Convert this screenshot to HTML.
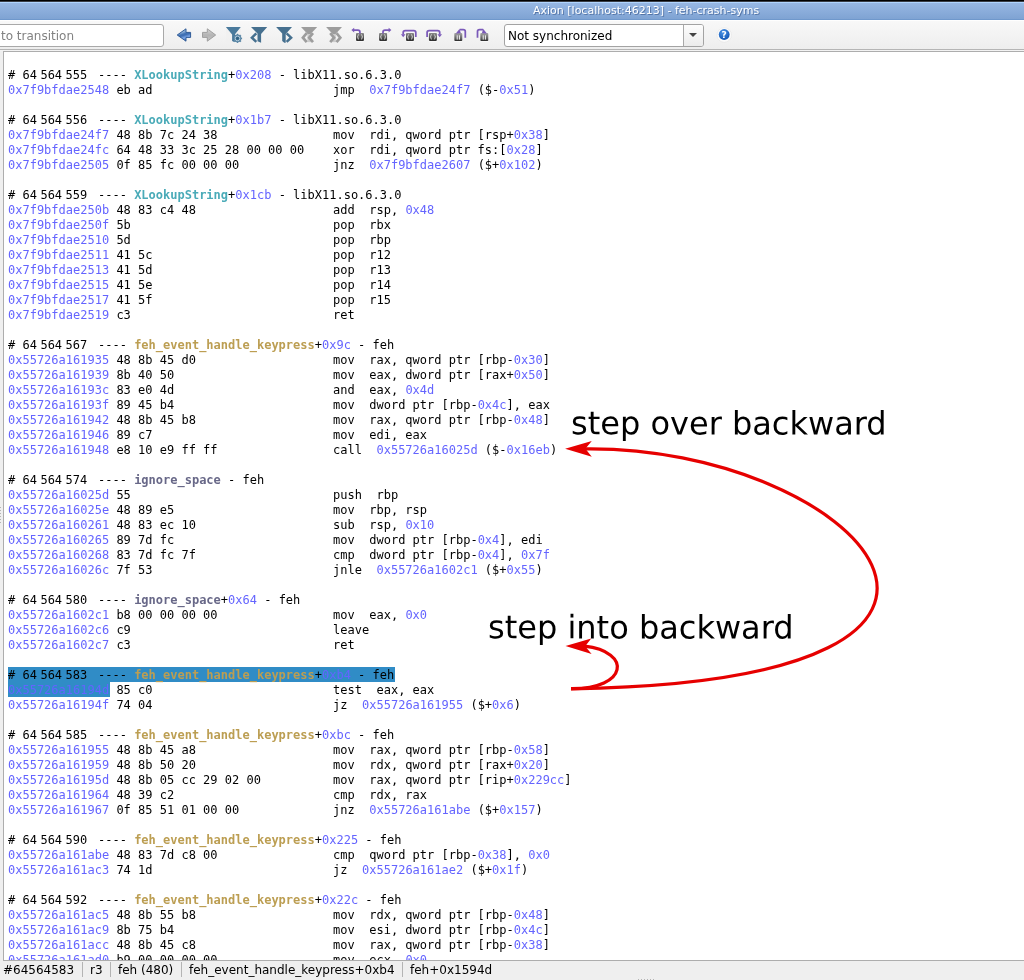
<!DOCTYPE html>
<html lang="en">
<head>
<meta charset="utf-8">
<title>Axion [localhost:46213] - feh-crash-syms</title>
<style>
html,body{margin:0;padding:0;}
body{width:1024px;height:980px;overflow:hidden;position:relative;background:#efefef;font-family:"DejaVu Sans","Liberation Sans",sans-serif;font-size:12px;color:#000;}
#top{position:absolute;left:0;top:0;width:1024px;height:2px;background:linear-gradient(#000 0,#000 1px,#3a3e46 1px,#3a3e46 2px);}
#title{position:absolute;left:0;top:2px;width:1024px;height:18px;background:linear-gradient(#b0d5ff 0,#b0d5ff 1px,#97b7e3 1px,#7fa3d3 17px,#6f98cc 17px,#6f98cc 18px);}
#title span{will-change:transform;text-shadow:1px 1px 0 rgba(45,75,125,.55);position:absolute;left:533px;top:2px;font-size:11px;line-height:13px;color:#fff;white-space:nowrap;}
#tb{position:absolute;left:0;top:20px;width:1024px;height:29px;background:linear-gradient(#fefefe 0,#fefefe 1px,#f8f8f8 1px,#eeeeee 100%);}
#tbl{position:absolute;left:0;top:49px;width:1024px;height:1px;background:#b5b5b5;}
#tbl2{position:absolute;left:0;top:50px;width:1024px;height:1px;background:#f3f3f3;}
#inp{position:absolute;left:-20px;top:24px;width:182px;height:21px;border:1px solid #a9a9a9;border-radius:3px;background:#fff;}
#inp span{will-change:transform;position:absolute;left:20px;top:4px;line-height:15px;color:#828282;white-space:nowrap;}
#cb{position:absolute;left:504px;top:24px;width:198px;height:21px;border:1px solid #a3a3a3;border-radius:3px;background:#fff;overflow:hidden;}
#cb span{will-change:transform;position:absolute;left:3px;top:4px;line-height:15px;white-space:nowrap;}
#cb i{position:absolute;left:178px;top:0;width:20px;height:21px;border-left:1px solid #a9a9a9;background:linear-gradient(#fdfdfd,#ececec);}
#cb u{position:absolute;left:184px;top:8px;width:0;height:0;border-left:4px solid transparent;border-right:4px solid transparent;border-top:4px solid #444;}
#pane{position:absolute;left:3px;top:51px;width:1030px;height:908px;border:1px solid #adadad;background:#fff;overflow:hidden;}
pre{position:absolute;left:4px;top:16px;will-change:transform;margin:0;font-family:"DejaVu Sans Mono","Liberation Mono",monospace;font-size:12px;line-height:15px;white-space:pre;color:#000;}
pre b{font-weight:normal;}
pre b.a{color:#6464ff;}
pre b.t{font-weight:bold;color:#4aabb8;}
pre b.f{font-weight:bold;color:#bc9e52;}
pre b.i{font-weight:bold;color:#686888;}
pre .n{word-spacing:-3.72px;}

#pane .hl{position:absolute;height:15px;background:#308cc6;}
#sb{position:absolute;left:0;top:961px;width:1024px;height:19px;background:#efefef;}
#sb span{will-change:transform;position:absolute;top:2px;line-height:15px;white-space:nowrap;}
#sb i{position:absolute;top:1px;width:1px;height:15px;background:#b4b4b4;}
.d{position:absolute;width:1px;height:1px;background:#b4b4b4;}
#ann{position:absolute;left:0;top:0;width:1024px;height:980px;pointer-events:none;}
.ic{position:absolute;top:27px;width:16px;height:16px;overflow:visible;}
</style>
</head>
<body>
<div id="top"></div>
<div id="title"><span>Axion [localhost:46213] - feh-crash-syms</span></div>
<div id="tb"></div>
<div id="tbl"></div><div id="tbl2"></div>
<div id="inp"><span>to transition</span></div>
<div id="cb"><span>Not synchronized</span><i></i><u></u></div>
<svg id="icons" width="340" height="30" viewBox="170 20 340 30" style="position:absolute;left:170px;top:20px">
<defs>
<linearGradient id="gba" x1="0" y1="0" x2=".35" y2="1"><stop offset="0" stop-color="#b4d2ea"/><stop offset=".38" stop-color="#86abd6"/><stop offset=".52" stop-color="#4273b6"/><stop offset=".62" stop-color="#3e6eb2"/><stop offset=".82" stop-color="#7ea9ea"/><stop offset="1" stop-color="#4a79be"/></linearGradient>
<linearGradient id="gfa" x1="0" y1="0" x2="0" y2="1"><stop offset="0" stop-color="#d8d8d8"/><stop offset=".5" stop-color="#b4b4b4"/><stop offset="1" stop-color="#c4c4c4"/></linearGradient>
<linearGradient id="gsq" x1="0" y1="0" x2="0" y2="1"><stop offset="0" stop-color="#8c8c8c"/><stop offset="1" stop-color="#2c2c2c"/></linearGradient>
<linearGradient id="gsq2" x1="0" y1="0" x2="0" y2="1"><stop offset="0" stop-color="#a8a8a8"/><stop offset=".8" stop-color="#555"/><stop offset="1" stop-color="#262626"/></linearGradient>
<radialGradient id="ghl" cx=".4" cy=".3" r=".8"><stop offset="0" stop-color="#4f97e8"/><stop offset="1" stop-color="#0b4fae"/></radialGradient>
</defs>
<path d="M177.2,35 L186,28.8 V32.4 H190.6 V37.4 H186 V41.2 Z" fill="url(#gba)" stroke="#23508f" stroke-width=".9" stroke-linejoin="round"/>
<path d="M215.7,35 L207.3,28.8 V32.4 H202.5 V37.4 H207.3 V41.2 Z" fill="url(#gfa)" stroke="#999" stroke-width=".9" stroke-linejoin="round"/>
<rect x="226" y="27" width="15" height="15.5" fill="#f0f0f0" opacity=".8"/>
<path d="M225.9,27 H240.8 L235,34.2 V36 H234.2 V42 L232.1,41 V34.4 Z" fill="#4a7a9c"/>
<polygon points="237.50,33.80 238.76,35.35 240.75,35.15 240.55,37.14 242.10,38.40 240.55,39.66 240.75,41.65 238.76,41.45 237.50,43.00 236.24,41.45 234.25,41.65 234.45,39.66 232.90,38.40 234.45,37.14 234.25,35.15 236.24,35.35" fill="#4a7a9c" stroke="#4a7a9c" stroke-width=".6" stroke-linejoin="round"/>
<circle cx="237.5" cy="38.4" r="2.35" fill="none" stroke="#b9d0df" stroke-width=".95"/>
<circle cx="237.5" cy="38.4" r="1.3" fill="#2e6080"/>
<path d="M251,27 H267.2 L261.1,33.9 V42.75 L257.5,41.3 V33.4 Z" fill="#46708f"/>
<path d="M256.3,33.4 L251.9,37.65 L256.3,41.9" fill="none" stroke="#46708f" stroke-width="2.5"/>
<path d="M276.1,27 H292 L285.7,33.9 V42.75 H284.3 L282.2,41.1 V33.4 Z" fill="#46708f"/>
<path d="M286.6,33.4 L291.1,37.65 L286.6,41.9" fill="none" stroke="#46708f" stroke-width="2.5"/>
<path d="M301,27 H317.2 L310.6,34 H307.6 Z" fill="#9d9d9d"/><rect x="307.4" y="33.5" width="3.6" height="8.6" fill="#9d9d9d" opacity=".45"/>
<path d="M306.7,33.2 L302.9,37.65 L306.7,42.1 M313,33.2 L309.2,37.65 L313,42.1" fill="none" stroke="#9d9d9d" stroke-width="2.7"/>
<path d="M326.1,27 H342 L335.6,34 H332.6 Z" fill="#9d9d9d"/><rect x="332.2" y="33.5" width="3.6" height="8.6" fill="#9d9d9d" opacity=".45"/>
<path d="M330.2,33.2 L334,37.65 L330.2,42.1 M336.5,33.2 L340.3,37.65 L336.5,42.1" fill="none" stroke="#9d9d9d" stroke-width="2.7"/>
<rect x="355.7" y="32.6" width="8.6" height="9.2" rx="1" fill="#fff" opacity=".7"/>
<rect x="356.0" y="32.9" width="8" height="8" rx=".8" fill="url(#gsq)"/>
<path d="M359.0,34.6 q-1,0 -1,1 v.6 q0,.7 -.9,.7 q.9,0 .9,.7 v.6 q0,1 1,1 M361.0,34.6 q1,0 1,1 v.6 q0,.7 .9,.7 q-.9,0 -.9,.7 v.6 q0,1 -1,1" fill="none" stroke="#d8d8d8" stroke-width=".9"/>
<path d="M359.9,33.4 V32.1 Q359.9,30.1 357.9,30.1 H353.4" fill="none" stroke="#7b5ab9" stroke-width="1.75"/><path d="M351.4,30.1 L354.2,27.7 V32.5 Z" fill="#7b5ab9"/>
<rect x="378.8" y="32.6" width="8.6" height="9.2" rx="1" fill="#fff" opacity=".7"/>
<rect x="379.1" y="32.9" width="8" height="8" rx=".8" fill="url(#gsq)"/>
<path d="M382.1,34.6 q-1,0 -1,1 v.6 q0,.7 -.9,.7 q.9,0 .9,.7 v.6 q0,1 1,1 M384.1,34.6 q1,0 1,1 v.6 q0,.7 .9,.7 q-.9,0 -.9,.7 v.6 q0,1 -1,1" fill="none" stroke="#d8d8d8" stroke-width=".9"/>
<path d="M383,33.4 V32.1 Q383,30.1 385,30.1 H389.4" fill="none" stroke="#7b5ab9" stroke-width="1.75"/><path d="M391.4,30.1 L388.6,27.7 V32.5 Z" fill="#7b5ab9"/>
<rect x="405.7" y="32.6" width="8.6" height="9.2" rx="1" fill="#fff" opacity=".7"/>
<rect x="406.0" y="32.9" width="8" height="8" rx=".8" fill="url(#gsq)"/>
<path d="M409.0,34.6 q-1,0 -1,1 v.6 q0,.7 -.9,.7 q.9,0 .9,.7 v.6 q0,1 1,1 M411.0,34.6 q1,0 1,1 v.6 q0,.7 .9,.7 q-.9,0 -.9,.7 v.6 q0,1 -1,1" fill="none" stroke="#d8d8d8" stroke-width=".9"/>
<path d="M415.8,36.9 V32.6 Q415.8,30.6 413.8,30.6 H405.2 Q403.2,30.6 403.2,32.6 V34.6" fill="none" stroke="#7b5ab9" stroke-width="1.75"/><path d="M403.2,37.2 L400.9,34.2 H405.5 Z" fill="#7b5ab9"/>
<rect x="428.6" y="32.6" width="8.6" height="9.2" rx="1" fill="#fff" opacity=".7"/>
<rect x="428.9" y="32.9" width="8" height="8" rx=".8" fill="url(#gsq)"/>
<path d="M431.9,34.6 q-1,0 -1,1 v.6 q0,.7 -.9,.7 q.9,0 .9,.7 v.6 q0,1 1,1 M433.9,34.6 q1,0 1,1 v.6 q0,.7 .9,.7 q-.9,0 -.9,.7 v.6 q0,1 -1,1" fill="none" stroke="#d8d8d8" stroke-width=".9"/>
<path d="M427.1,36.9 V32.6 Q427.1,30.6 429.1,30.6 H437.7 Q439.7,30.6 439.7,32.6 V34.6" fill="none" stroke="#7b5ab9" stroke-width="1.75"/><path d="M439.7,37.2 L437.4,34.2 H442 Z" fill="#7b5ab9"/>
<rect x="454.0" y="32.6" width="8.6" height="9.2" rx="1" fill="#fff" opacity=".7"/>
<rect x="454.3" y="32.9" width="8" height="8" rx=".9" fill="url(#gsq2)"/>
<path d="M457.2,35.3 v4.3 M459.4,35.3 v4.3" fill="none" stroke="#f4f4f4" stroke-width="1"/>
<path d="M465.3,37.8 V31.6 Q465.3,29.6 463.3,29.6 H459.6" fill="none" stroke="#7b5ab9" stroke-width="1.75"/><path d="M455.8,33.6 L459.4,28.9 L460.9,33.2 Z" fill="#7b5ab9"/>
<rect x="480.0" y="32.6" width="8.6" height="9.2" rx="1" fill="#fff" opacity=".7"/>
<rect x="480.3" y="32.9" width="8" height="8" rx=".9" fill="url(#gsq2)"/>
<path d="M483.2,35.3 v4.3 M485.4,35.3 v4.3" fill="none" stroke="#f4f4f4" stroke-width="1"/>
<path d="M477.5,37.8 V31.6 Q477.5,29.6 479.5,29.6 H483.2" fill="none" stroke="#7b5ab9" stroke-width="1.75"/><path d="M486.9,33.6 L483.3,28.9 L481.8,33.2 Z" fill="#7b5ab9"/>
</svg>
<svg id="help" width="20" height="20" viewBox="714 25 20 20" style="position:absolute;left:714px;top:25px">
<circle cx="724.2" cy="34.8" r="7.3" fill="#fbfbfb"/><circle cx="724.2" cy="35" r="7.3" fill="none" stroke="#e4e4e4" stroke-width=".6"/>
<circle cx="724.2" cy="34.5" r="5.4" fill="url(#ghl)"/>
<text x="724.2" y="38" text-anchor="middle" font-family="DejaVu Sans, Liberation Sans, sans-serif" font-weight="bold" font-size="9" fill="#fff">?</text>
</svg>
<div id="pane"><div class="hl" style="left:4px;top:615px;width:387px"></div><div class="hl" style="left:4px;top:630px;width:102px"></div><pre># <span class="n">64 564 555 </span> ---- <b class="t">XLookupString</b>+<b class="a">0x208</b> - libX11.so.6.3.0
<b class="a">0x7f9bfdae2548</b> eb ad                         jmp  <b class="a">0x7f9bfdae24f7</b> ($-<b class="a">0x51</b>)

# <span class="n">64 564 556 </span> ---- <b class="t">XLookupString</b>+<b class="a">0x1b7</b> - libX11.so.6.3.0
<b class="a">0x7f9bfdae24f7</b> 48 8b 7c 24 38                mov  rdi, qword ptr [rsp+<b class="a">0x38</b>]
<b class="a">0x7f9bfdae24fc</b> 64 48 33 3c 25 28 00 00 00    xor  rdi, qword ptr fs:[<b class="a">0x28</b>]
<b class="a">0x7f9bfdae2505</b> 0f 85 fc 00 00 00             jnz  <b class="a">0x7f9bfdae2607</b> ($+<b class="a">0x102</b>)

# <span class="n">64 564 559 </span> ---- <b class="t">XLookupString</b>+<b class="a">0x1cb</b> - libX11.so.6.3.0
<b class="a">0x7f9bfdae250b</b> 48 83 c4 48                   add  rsp, <b class="a">0x48</b>
<b class="a">0x7f9bfdae250f</b> 5b                            pop  rbx
<b class="a">0x7f9bfdae2510</b> 5d                            pop  rbp
<b class="a">0x7f9bfdae2511</b> 41 5c                         pop  r12
<b class="a">0x7f9bfdae2513</b> 41 5d                         pop  r13
<b class="a">0x7f9bfdae2515</b> 41 5e                         pop  r14
<b class="a">0x7f9bfdae2517</b> 41 5f                         pop  r15
<b class="a">0x7f9bfdae2519</b> c3                            ret

# <span class="n">64 564 567 </span> ---- <b class="f">feh_event_handle_keypress</b>+<b class="a">0x9c</b> - feh
<b class="a">0x55726a161935</b> 48 8b 45 d0                   mov  rax, qword ptr [rbp-<b class="a">0x30</b>]
<b class="a">0x55726a161939</b> 8b 40 50                      mov  eax, dword ptr [rax+<b class="a">0x50</b>]
<b class="a">0x55726a16193c</b> 83 e0 4d                      and  eax, <b class="a">0x4d</b>
<b class="a">0x55726a16193f</b> 89 45 b4                      mov  dword ptr [rbp-<b class="a">0x4c</b>], eax
<b class="a">0x55726a161942</b> 48 8b 45 b8                   mov  rax, qword ptr [rbp-<b class="a">0x48</b>]
<b class="a">0x55726a161946</b> 89 c7                         mov  edi, eax
<b class="a">0x55726a161948</b> e8 10 e9 ff ff                call  <b class="a">0x55726a16025d</b> ($-<b class="a">0x16eb</b>)

# <span class="n">64 564 574 </span> ---- <b class="i">ignore_space</b> - feh
<b class="a">0x55726a16025d</b> 55                            push  rbp
<b class="a">0x55726a16025e</b> 48 89 e5                      mov  rbp, rsp
<b class="a">0x55726a160261</b> 48 83 ec 10                   sub  rsp, <b class="a">0x10</b>
<b class="a">0x55726a160265</b> 89 7d fc                      mov  dword ptr [rbp-<b class="a">0x4</b>], edi
<b class="a">0x55726a160268</b> 83 7d fc 7f                   cmp  dword ptr [rbp-<b class="a">0x4</b>], <b class="a">0x7f</b>
<b class="a">0x55726a16026c</b> 7f 53                         jnle  <b class="a">0x55726a1602c1</b> ($+<b class="a">0x55</b>)

# <span class="n">64 564 580 </span> ---- <b class="i">ignore_space</b>+<b class="a">0x64</b> - feh
<b class="a">0x55726a1602c1</b> b8 00 00 00 00                mov  eax, <b class="a">0x0</b>
<b class="a">0x55726a1602c6</b> c9                            leave
<b class="a">0x55726a1602c7</b> c3                            ret

<span class="s"># <span class="n">64 564 583 </span> ---- <b class="f">feh_event_handle_keypress</b>+<b class="a">0xb4</b> - feh</span>
<span class="s"><b class="a">0x55726a16194d</b></span> 85 c0                         test  eax, eax
<b class="a">0x55726a16194f</b> 74 04                         jz  <b class="a">0x55726a161955</b> ($+<b class="a">0x6</b>)

# <span class="n">64 564 585 </span> ---- <b class="f">feh_event_handle_keypress</b>+<b class="a">0xbc</b> - feh
<b class="a">0x55726a161955</b> 48 8b 45 a8                   mov  rax, qword ptr [rbp-<b class="a">0x58</b>]
<b class="a">0x55726a161959</b> 48 8b 50 20                   mov  rdx, qword ptr [rax+<b class="a">0x20</b>]
<b class="a">0x55726a16195d</b> 48 8b 05 cc 29 02 00          mov  rax, qword ptr [rip+<b class="a">0x229cc</b>]
<b class="a">0x55726a161964</b> 48 39 c2                      cmp  rdx, rax
<b class="a">0x55726a161967</b> 0f 85 51 01 00 00             jnz  <b class="a">0x55726a161abe</b> ($+<b class="a">0x157</b>)

# <span class="n">64 564 590 </span> ---- <b class="f">feh_event_handle_keypress</b>+<b class="a">0x225</b> - feh
<b class="a">0x55726a161abe</b> 48 83 7d c8 00                cmp  qword ptr [rbp-<b class="a">0x38</b>], <b class="a">0x0</b>
<b class="a">0x55726a161ac3</b> 74 1d                         jz  <b class="a">0x55726a161ae2</b> ($+<b class="a">0x1f</b>)

# <span class="n">64 564 592 </span> ---- <b class="f">feh_event_handle_keypress</b>+<b class="a">0x22c</b> - feh
<b class="a">0x55726a161ac5</b> 48 8b 55 b8                   mov  rdx, qword ptr [rbp-<b class="a">0x48</b>]
<b class="a">0x55726a161ac9</b> 8b 75 b4                      mov  esi, dword ptr [rbp-<b class="a">0x4c</b>]
<b class="a">0x55726a161acc</b> 48 8b 45 c8                   mov  rax, qword ptr [rbp-<b class="a">0x38</b>]
<b class="a">0x55726a161ad0</b> b9 00 00 00 00                mov  ecx, <b class="a">0x0</b>
</pre></div>
<div id="sb">
<span style="left:3px">#64564583</span><i style="left:82px"></i>
<span style="left:89.6px">r3</span><i style="left:110px"></i>
<span style="left:118.4px">feh (480)</span><i style="left:181px"></i>
<span style="left:189.4px">feh_event_handle_keypress+0xb4</span><i style="left:402px"></i>
<span style="left:410.4px">feh+0x1594d</span>
</div>
<i class="d" style="left:0;top:507px"></i><i class="d" style="left:0;top:510px"></i><i class="d" style="left:0;top:513px"></i><i class="d" style="left:0;top:516px"></i><i class="d" style="left:0;top:519px"></i><i class="d" style="left:0;top:522px"></i><i class="d" style="left:638px;top:979px"></i><i class="d" style="left:641px;top:979px"></i><i class="d" style="left:644px;top:979px"></i><i class="d" style="left:647px;top:979px"></i><i class="d" style="left:650px;top:979px"></i><i class="d" style="left:653px;top:979px"></i>
<svg id="ann" viewBox="0 0 1024 980">
<g fill="none" stroke="#e60000" stroke-width="3.2">
<path d="M571,688.8 C1085.1,681.6 854.2,445.5 584.5,448.9"/>
<path d="M571,688.7 C628.1,689.2 632.2,651.6 584.5,646.2"/>
</g>
<g fill="#e60000">
<path d="M565.1,448.7 L591.8,441.05 L585.4,448.8 L591.8,456.85 Z"/>
<path d="M565.5,645.9 L591.2,638.6 L585.2,646.3 L591.6,653.9 Z"/>
</g>
<text style="text-rendering:geometricPrecision" transform="translate(571.1,434.3) rotate(0.05) scale(0.9938,1)" font-family="DejaVu Sans, Liberation Sans, sans-serif" font-size="32.2" fill="#000">step over backward</text>
<text style="text-rendering:geometricPrecision" transform="translate(488.1,638.3) rotate(0.05) scale(0.9938,1)" font-family="DejaVu Sans, Liberation Sans, sans-serif" font-size="32.2" fill="#000">step into backward</text>
</svg>
</body>
</html>
